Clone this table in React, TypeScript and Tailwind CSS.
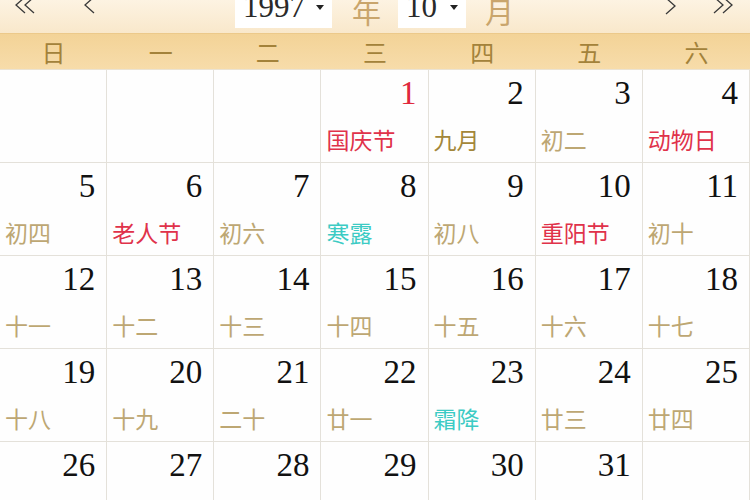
import React from 'react';

type Day = { n: number; label: string; kind: 'lunar' | 'month' | 'holiday' | 'term' };

const WEEK = ['日', '一', '二', '三', '四', '五', '六'];

const DAYS: (Day | null)[] = [
  null,
  null,
  null,
  { n: 1, label: '国庆节', kind: 'holiday' },
  { n: 2, label: '九月', kind: 'month' },
  { n: 3, label: '初二', kind: 'lunar' },
  { n: 4, label: '动物日', kind: 'holiday' },
  { n: 5, label: '初四', kind: 'lunar' },
  { n: 6, label: '老人节', kind: 'holiday' },
  { n: 7, label: '初六', kind: 'lunar' },
  { n: 8, label: '寒露', kind: 'term' },
  { n: 9, label: '初八', kind: 'lunar' },
  { n: 10, label: '重阳节', kind: 'holiday' },
  { n: 11, label: '初十', kind: 'lunar' },
  { n: 12, label: '十一', kind: 'lunar' },
  { n: 13, label: '十二', kind: 'lunar' },
  { n: 14, label: '十三', kind: 'lunar' },
  { n: 15, label: '十四', kind: 'lunar' },
  { n: 16, label: '十五', kind: 'lunar' },
  { n: 17, label: '十六', kind: 'lunar' },
  { n: 18, label: '十七', kind: 'lunar' },
  { n: 19, label: '十八', kind: 'lunar' },
  { n: 20, label: '十九', kind: 'lunar' },
  { n: 21, label: '二十', kind: 'lunar' },
  { n: 22, label: '廿一', kind: 'lunar' },
  { n: 23, label: '霜降', kind: 'term' },
  { n: 24, label: '廿三', kind: 'lunar' },
  { n: 25, label: '廿四', kind: 'lunar' },
  { n: 26, label: '廿五', kind: 'lunar' },
  { n: 27, label: '廿六', kind: 'lunar' },
  { n: 28, label: '廿七', kind: 'lunar' },
  { n: 29, label: '廿八', kind: 'lunar' },
  { n: 30, label: '廿九', kind: 'lunar' },
  { n: 31, label: '十月', kind: 'month' },
  null,
];

const labelColor = {
  lunar: 'text-[#bda773]',
  month: 'text-[#a3873a]',
  holiday: 'text-[#e0324a]',
  term: 'text-[#3ccbc4]',
};

/* chevron drawn thin, like the old browser calendar arrows */
const Chevron = ({ dir }: { dir: 'left' | 'right' }) => (
  <svg width="12" height="18" viewBox="0 0 12 18" className="block">
    <polyline
      points={dir === 'left' ? '11,1 2,9 11,17' : '1,1 10,9 1,17'}
      fill="none"
      stroke="#3a3a3a"
      strokeWidth="1.3"
    />
  </svg>
);

const Select = ({ value, width }: { value: string; width: string }) => (
  <div className={`${width} h-[28px] bg-white flex items-start overflow-hidden`}>
    <span className="ml-[8px] -mt-[9px] text-[31px] leading-[31px] text-[#2a2a2a] font-['Liberation_Serif',serif]">
      {value}
    </span>
    <span className="ml-auto mr-[8px] mt-[5px] w-0 h-0 border-l-[4px] border-r-[4px] border-t-[5px] border-l-transparent border-r-transparent border-t-[#222]" />
  </div>
);

export default function App() {
  return (
    <div className="w-[750px] h-[500px] overflow-hidden bg-white">
      {/* TOP BAR */}
      <div className="h-[33px] flex items-start bg-gradient-to-b from-[#fdf3e2] to-[#f9e8cb] font-['Noto_Sans_CJK_SC',sans-serif]">
        <div className="ml-[14px] -mt-[4px] flex -space-x-[3px]">
          <Chevron dir="left" />
          <Chevron dir="left" />
        </div>
        <div className="ml-[48px] -mt-[4px]">
          <Chevron dir="left" />
        </div>
        <div className="ml-[140px]">
          <Select value="1997" width="w-[97px]" />
        </div>
        <span className="ml-[20px] -mt-[6px] text-[29px] leading-[34px] text-[#c9a56c]">年</span>
        <div className="ml-[17px]">
          <Select value="10" width="w-[68px]" />
        </div>
        <span className="ml-[19px] -mt-[6px] text-[29px] leading-[34px] text-[#c9a56c]">月</span>
        <div className="ml-[151px] -mt-[3px]">
          <Chevron dir="right" />
        </div>
        <div className="ml-[36px] -mt-[4px] flex -space-x-[3px]">
          <Chevron dir="right" />
          <Chevron dir="right" />
        </div>
      </div>

      {/* WEEKDAY BAND */}
      <div className="h-[36px] grid grid-cols-7 items-center bg-gradient-to-b from-[#f3d397] to-[#f7dcaa] border-t border-[#ecc98a]">
        {WEEK.map((w) => (
          <div
            key={w}
            className="text-center text-[24px] leading-[30px] text-[#a3823a] font-['Noto_Sans_CJK_SC',sans-serif]"
          >
            {w}
          </div>
        ))}
      </div>

      {/* DAYS GRID */}
      <div className="grid grid-cols-7 border-t border-[#ebe3d3]">
        {DAYS.map((d, i) => (
          <div key={i} className="h-[93px] border-r border-b border-[#e4e1da] bg-[#fefefe]">
            {d && (
              <div className="flex flex-col">
                <span
                  className={`self-end pt-[7px] pr-[11px] text-[33px] leading-[33px] font-['Liberation_Serif',serif] ${
                    d.n === 1 ? 'text-[#e0283c]' : 'text-[#111]'
                  }`}
                >
                  {d.n}
                </span>
                <span
                  className={`mt-[18px] pl-[5px] text-[23px] leading-[23px] font-['Noto_Sans_CJK_SC',sans-serif] ${labelColor[d.kind]}`}
                >
                  {d.label}
                </span>
              </div>
            )}
          </div>
        ))}
      </div>
    </div>
  );
}
